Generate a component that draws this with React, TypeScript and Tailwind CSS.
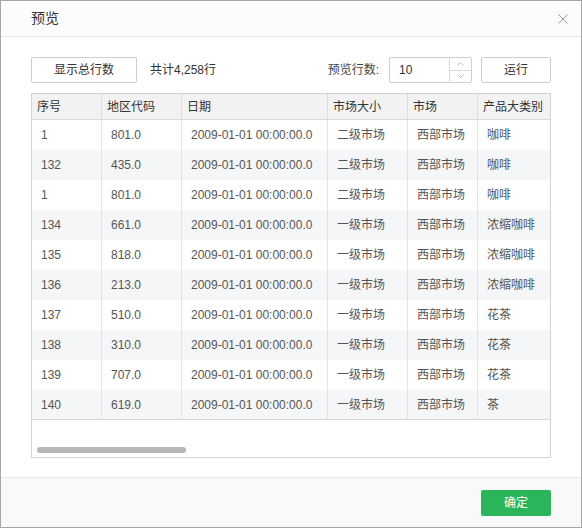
import React from "react";

const columns = [
  { key: "id", title: "序号", width: 70 },
  { key: "code", title: "地区代码", width: 80 },
  { key: "date", title: "日期", width: 146 },
  { key: "size", title: "市场大小", width: 80 },
  { key: "market", title: "市场", width: 70 },
];

const rows = [
  ["1", "801.0", "2009-01-01 00:00:00.0", "二级市场", "西部市场", "咖啡"],
  ["132", "435.0", "2009-01-01 00:00:00.0", "二级市场", "西部市场", "咖啡"],
  ["1", "801.0", "2009-01-01 00:00:00.0", "二级市场", "西部市场", "咖啡"],
  ["134", "661.0", "2009-01-01 00:00:00.0", "一级市场", "西部市场", "浓缩咖啡"],
  ["135", "818.0", "2009-01-01 00:00:00.0", "一级市场", "西部市场", "浓缩咖啡"],
  ["136", "213.0", "2009-01-01 00:00:00.0", "一级市场", "西部市场", "浓缩咖啡"],
  ["137", "510.0", "2009-01-01 00:00:00.0", "一级市场", "西部市场", "花茶"],
  ["138", "310.0", "2009-01-01 00:00:00.0", "一级市场", "西部市场", "花茶"],
  ["139", "707.0", "2009-01-01 00:00:00.0", "一级市场", "西部市场", "花茶"],
  ["140", "619.0", "2009-01-01 00:00:00.0", "一级市场", "西部市场", "茶"],
];

const font = "font-['Liberation_Sans','Noto_Sans_CJK_SC',sans-serif]";

function PreviewTable() {
  return (
    <div className="mt-[10px] h-[365px] border border-[#d3d3d3] flex flex-col">
      {/* Header */}
      <div className="flex h-[26px] shrink-0 bg-[#f2f2f2] border-b border-[#d9d9d9]">
        {columns.map((c) => (
          <div
            key={c.key}
            style={{ width: c.width }}
            className="shrink-0 flex items-center pl-[5px] text-[12px] text-[#333] border-r border-[#dcdcdc]"
          >
            {c.title}
          </div>
        ))}
        <div className="flex-1 flex items-center pl-[5px] text-[12px] text-[#333] whitespace-nowrap">
          产品大类别
        </div>
      </div>

      {/* Body */}
      {rows.map((r, ri) => (
        <div
          key={ri}
          className={`flex h-[30px] shrink-0 ${ri % 2 === 1 ? "bg-[#f5f6f8]" : "bg-white"} ${
            ri === rows.length - 1 ? "border-b border-[#d9d9d9]" : ""
          }`}
        >
          {r.map((cell, ci) => (
            <div
              key={ci}
              style={ci < 5 ? { width: columns[ci].width } : undefined}
              className={
                ci < 5
                  ? "shrink-0 flex items-center pl-[9px] text-[12px] text-[#555] border-r border-[#e2e2e2] whitespace-nowrap"
                  : "flex-1 flex items-center pl-[9px] text-[12px] text-[#555] whitespace-nowrap"
              }
            >
              {cell}
            </div>
          ))}
        </div>
      ))}

      <div className="flex-1" />

      {/* Horizontal scrollbar */}
      <div className="h-[6px] mb-[4px] pl-[5px]">
        <div className="w-[149px] h-[6px] rounded-full bg-[#b6b6b6]" />
      </div>
    </div>
  );
}

export default function App() {
  return (
    <div className={`w-[582px] h-[528px] bg-white border border-[#a6a6a6] flex flex-col antialiased ${font}`}>
      {/* Title bar */}
      <div className="h-[36px] shrink-0 flex items-center justify-between pl-[30px] pr-[13px] border-b border-[#e6e6e6] bg-[#fcfcfc]">
        <span className="text-[14px] text-[#333]">预览</span>
        <svg width="10" height="10" viewBox="0 0 10 10">
          <path d="M0.5 0.5L9.5 9.5M9.5 0.5L0.5 9.5" stroke="#9a9a9a" strokeWidth="1" />
        </svg>
      </div>

      {/* Content */}
      <div className="flex-1 pt-[20px] px-[30px]">
        <div className="flex items-center h-[26px]">
          <button className="w-[106px] h-[26px] border border-[#cfcfcf] rounded-[2px] bg-white text-[12px] text-[#333]">
            显示总行数
          </button>
          <span className="ml-[13px] text-[12px] text-[#333]">共计4,258行</span>
          <div className="flex-1" />
          <span className="text-[12px] text-[#444]">预览行数:</span>
          <div className="ml-[10px] w-[83px] h-[26px] border border-[#cfcfcf] rounded-[2px] flex">
            <div className="flex-1 flex items-center pl-[9px] text-[12px] text-[#333]">10</div>
            <div className="w-[22px] border-l border-[#dcdcdc] flex flex-col">
              <div className="flex-1 flex items-center justify-center border-b border-[#dcdcdc]">
                <svg width="7" height="4" viewBox="0 0 7 4">
                  <path d="M0.5 3.5L3.5 0.5L6.5 3.5" stroke="#bdbdbd" fill="none" strokeWidth="1" />
                </svg>
              </div>
              <div className="flex-1 flex items-center justify-center">
                <svg width="7" height="4" viewBox="0 0 7 4">
                  <path d="M0.5 0.5L3.5 3.5L6.5 0.5" stroke="#bdbdbd" fill="none" strokeWidth="1" />
                </svg>
              </div>
            </div>
          </div>
          <button className="ml-[9px] w-[70px] h-[26px] border border-[#cfcfcf] rounded-[2px] bg-white text-[12px] text-[#333]">
            运行
          </button>
        </div>

        <PreviewTable />
      </div>

      {/* Footer */}
      <div className="h-[50px] shrink-0 border-t border-[#e8e8e8] bg-[#f9f9f9] flex justify-end items-start pt-[12px] pr-[30px]">
        <button className="w-[70px] h-[26px] rounded-[2px] bg-[#2bb55a] text-white text-[12px]">
          确定
        </button>
      </div>
    </div>
  );
}
